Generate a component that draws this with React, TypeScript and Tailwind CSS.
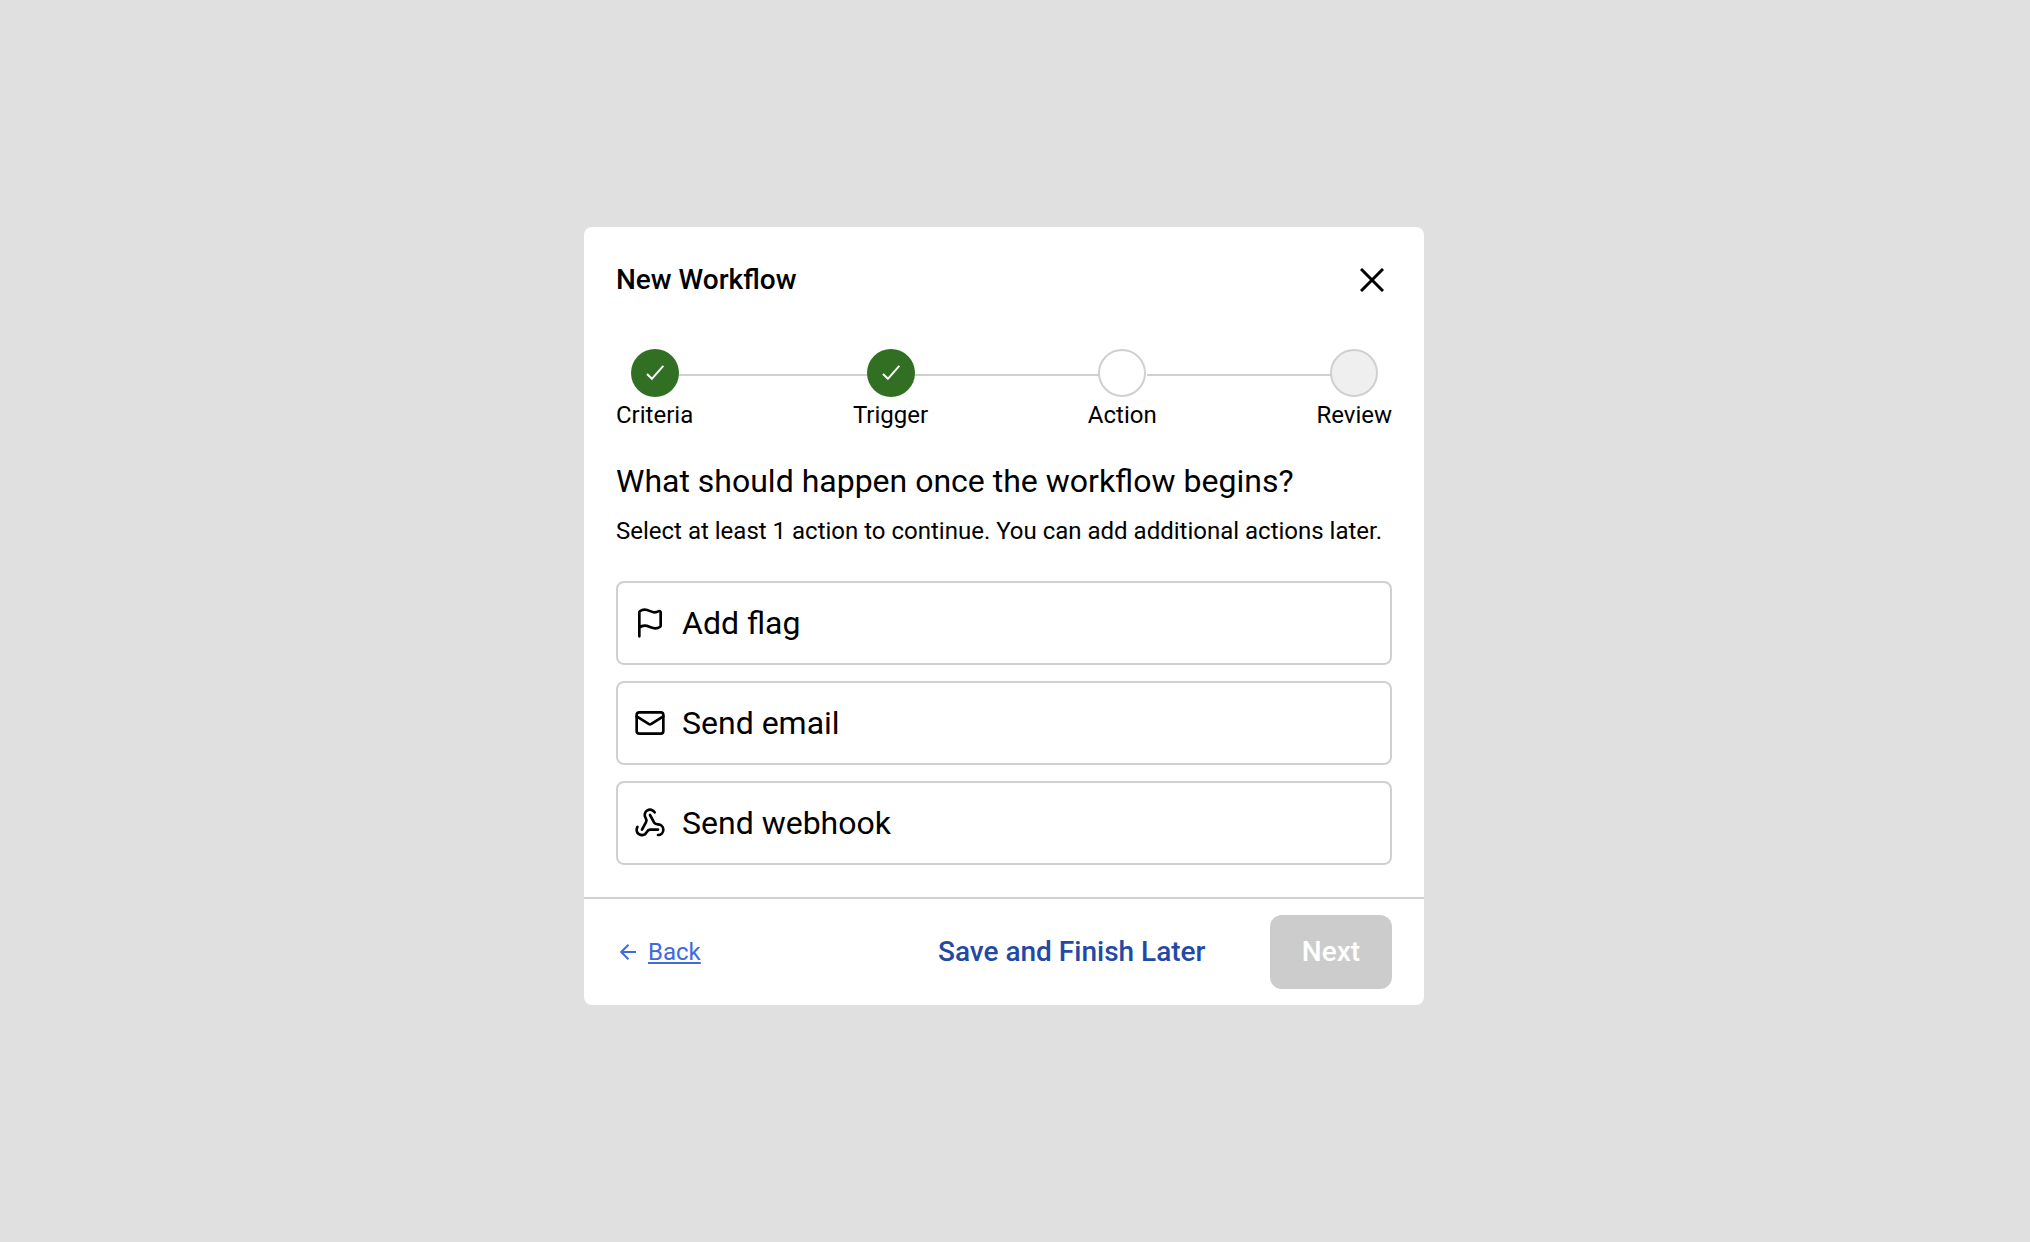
import { Fragment } from 'react';
import { Flag, Mail, Webhook } from 'lucide-react';

type StepState = 'done' | 'current' | 'upcoming';

const steps: { label: string; state: StepState }[] = [
  { label: 'Criteria', state: 'done' },
  { label: 'Trigger', state: 'done' },
  { label: 'Action', state: 'current' },
  { label: 'Review', state: 'upcoming' },
];

const actions = [
  { label: 'Add flag', Icon: Flag },
  { label: 'Send email', Icon: Mail },
  { label: 'Send webhook', Icon: Webhook },
];

const circleStyles: Record<StepState, string> = {
  done: 'bg-[#316f22]',
  current: 'border-2 border-[#d0d0d0] bg-white',
  upcoming: 'border-2 border-[#d0d0d0] bg-[#efefef]',
};

// Each connector reaches past the label's edge to the circle beside it.
const connectorStyles = ['-ml-4 -mr-4', '-ml-4 -mr-3', '-ml-[10px] -mr-4'];

function Stepper() {
  return (
    <div className="flex h-20">
      {steps.map((step, i) => (
        <Fragment key={step.label}>
          <div className="flex flex-col items-center">
            <div
              className={`relative z-10 flex size-12 shrink-0 items-center justify-center rounded-full ${circleStyles[step.state]}`}
            >
              {step.state === 'done' && (
                <svg className="size-6" viewBox="0 0 24 24" fill="none" stroke="white" strokeWidth="2">
                  <path d="M4 13 8.9 17.8 20.3 4.8" />
                </svg>
              )}
            </div>
            <div className="mt-1 text-2xl leading-7">{step.label}</div>
          </div>
          {i < steps.length - 1 && (
            <div className="flex-1 pt-[25px]">
              <div className={`h-0.5 bg-[#d0d0d0] ${connectorStyles[i]}`} />
            </div>
          )}
        </Fragment>
      ))}
    </div>
  );
}

export default function App() {
  return (
    <div className="h-[1242px] bg-[#e0e0e0] pt-[227px] pl-[584px] font-['Roboto',sans-serif] text-black">
      <div className="flex h-[778px] w-[840px] flex-col rounded-lg bg-white">
        <div className="flex-1 px-8">
          <div className="flex h-[122px] items-start justify-between pt-[37px]">
            <h1 className="text-[28px] leading-8 font-medium">New Workflow</h1>
            <button aria-label="Close" className="mt-1 mr-2">
              <svg className="size-6" viewBox="0 0 24 24" stroke="black" strokeWidth="3" strokeLinecap="butt">
                <path d="M1 1 23 23M23 1 1 23" />
              </svg>
            </button>
          </div>
          <Stepper />
          <h2 className="mt-8 text-[32px] leading-10">What should happen once the workflow begins?</h2>
          <p className="mt-4 text-2xl leading-7">Select at least 1 action to continue. You can add additional actions later.</p>
          <div className="mt-[36px] flex flex-col gap-4">
            {actions.map(({ label, Icon }) => (
              <button key={label} className="flex h-[84px] items-center gap-4 rounded-lg border-2 border-[#d0d0d0] px-4 text-[32px]">
                <Icon className="size-8" strokeWidth={2} />
                {label}
              </button>
            ))}
          </div>
        </div>
        <div className="flex h-[108px] items-center border-t-2 border-[#d0d0d0] px-8">
          <a className="flex items-center text-2xl text-[#4169e1]">
            <svg className="mr-3 ml-1 size-4" viewBox="0 0 16 16" fill="none" stroke="currentColor" strokeWidth="2">
              <path d="M16 8H1M8.5 .7 1.2 8l7.3 7.3" />
            </svg>
            <span className="underline decoration-2 underline-offset-2">Back</span>
          </a>
          <button className="ml-auto text-[28px] font-medium text-[#2449a4]">Save and Finish Later</button>
          <button className="ml-[64.5px] h-[74px] w-[122px] rounded-xl bg-[#cccccc] text-[28px] font-medium text-white">Next</button>
        </div>
      </div>
    </div>
  );
}
